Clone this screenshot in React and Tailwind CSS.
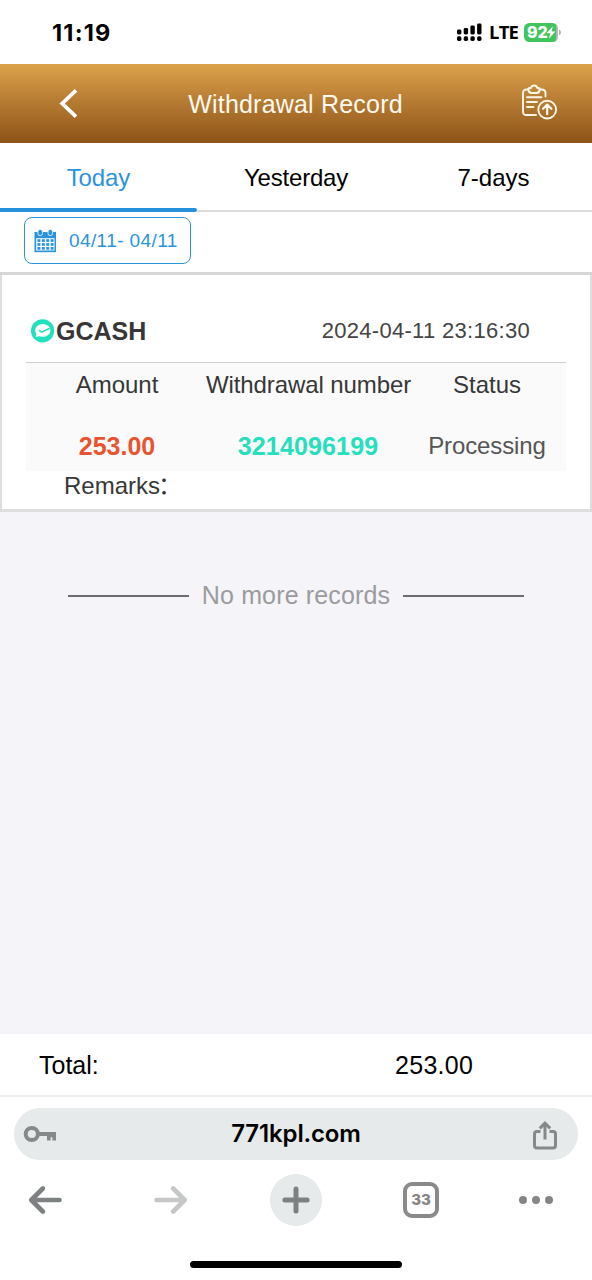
const tabs = [
  { label: 'Today', width: 'w-[197px]', tracking: 'tracking-[-0.1px]', active: true },
  { label: 'Yesterday', width: 'w-[198px]', tracking: 'tracking-[-0.2px]' },
  { label: '7-days', width: 'w-[197px]', tracking: 'tracking-[0px]' },
];

const record = {
  method: 'GCASH',
  time: '2024-04-11 23:16:30',
  amount: '253.00',
  number: '3214096199',
  status: 'Processing',
};

function SignalIcon() {
  const bars = [
    { x: 0, h: 5 },
    { x: 6.7, h: 6.5 },
    { x: 13.4, h: 9 },
    { x: 20.1, h: 11 },
  ];
  return (
    <svg width="25" height="19" viewBox="0 0 25 19" fill="#000">
      {bars.map((b) => (
        <g key={b.x}>
          <rect x={b.x} y={11.5 - b.h} width="4.4" height={b.h} rx="1.4" />
          <rect x={b.x} y="13.3" width="4.4" height="4.6" rx="1.6" />
        </g>
      ))}
    </svg>
  );
}

function BatteryIcon() {
  return (
    <div className="flex items-center">
      <div className="flex h-[19px] w-[34px] items-center overflow-hidden rounded-[5.5px] bg-[linear-gradient(to_right,#41c45d_32px,#b3b3b3_32px)] pl-[3px]">
        <span className="font-['Inter',sans-serif] text-[16px] leading-none font-extrabold tracking-[-0.2px] text-white">92</span>
        <svg width="10" height="13" viewBox="0 0 10 13" className="-ml-px shrink-0" fill="#fff">
          <path d="M6.8 0.3 L0.6 7.2 H4.3 L2.9 12.7 L9.4 5.4 H5.6 Z" />
        </svg>
      </div>
      <svg width="4" height="7" viewBox="0 0 4 7" fill="#b3b3b3">
        <path d="M1 0.5 C3.6 1.6 3.6 5.4 1 6.5 Z" />
      </svg>
    </div>
  );
}

function StatusBar() {
  return (
    <div className="flex h-16 items-center justify-between bg-white pr-[30px] pl-[52px]">
      <span className="pt-px font-['Inter',sans-serif] text-[23.5px] leading-none font-bold tracking-[1.2px] text-black">11:19</span>
      <div className="flex items-center">
        <SignalIcon />
        <span className="ml-[7px] w-[29px] font-['Open_Sans',sans-serif] text-[18.5px] leading-none font-bold tracking-[-0.8px] text-black">LTE</span>
        <div className="ml-[6px]">
          <BatteryIcon />
        </div>
      </div>
    </div>
  );
}

function Header() {
  return (
    <header className="flex h-[79px] items-center bg-linear-to-b from-[#dda24b] to-[#8d5317] pr-[34px] pl-[59px]">
      <svg width="20" height="32" viewBox="0 0 20 32" fill="none" stroke="#fff" strokeWidth="3.8">
        <path d="M17 2.3 L3.2 15.5 L17 28.7" />
      </svg>
      <h1 className="flex-1 pr-[9px] pt-px text-center text-[25px] leading-none tracking-[0.2px] text-[#fffaf0]">
        Withdrawal Record
      </h1>
      <svg width="37" height="37" viewBox="0 0 37 37" className="-mt-[3px]" fill="none" stroke="#fff8ea" strokeWidth="1.9" strokeLinecap="round" strokeLinejoin="round">
        <path d="M7.5 5.5 H5.5 Q2 5.5 2 9 V27.5 Q2 31 5.5 31 H15" />
        <path d="M18.5 5.5 H20.5 Q24.5 5.5 24.5 9 V12.5" />
        <path d="M7.3 5.3 Q7.3 4 8.8 4 H10 C10.4 0.6 15.8 0.6 16.2 4 H17.3 Q18.8 4 18.8 5.3 Q18.4 9 15.5 9 H10.6 Q7.7 9 7.3 5.3 Z" />
        <path d="M6 13.2 H20.5 M6 18 H16 M6 23 H12.5" />
        <circle cx="26.2" cy="25.6" r="8.9" />
        <path d="M26.2 30.2 V21 M22 24.8 L26.2 20.6 L30.4 24.8" strokeWidth="2.2" />
      </svg>
    </header>
  );
}

function Tabs() {
  return (
    <nav className="flex h-[69px] bg-white">
      {tabs.map((t) => (
        <div
          key={t.label}
          className={`flex flex-col justify-between ${t.width} ${t.active ? 'text-[#2b93dc]' : 'text-black'}`}
        >
          <span className={`pt-[22px] text-center text-[24px] leading-[25px] ${t.tracking}`}>{t.label}</span>
          {t.active ? (
            <div className="h-[4px] rounded-r-sm bg-[#2590dc]" />
          ) : (
            <div className="mb-[0.5px] h-[1.5px] bg-[#dcdcdc]" />
          )}
        </div>
      ))}
    </nav>
  );
}

function CalendarIcon() {
  return (
    <svg width="23" height="24" viewBox="0 0 23 24">
      <path fill="#2b93dc" d="M0.5 3 H22 V23.2 H0.5 Z" />
      <path fill="#fff" d="M2.2 9.2 H20.5 V21.5 H2.2 Z" />
      {[3.4, 7.8, 12.2, 16.6].map((x) =>
        [10.2, 14.1, 18].map((y) => <rect key={`${x}-${y}`} x={x} y={y} width="3" height="2.7" fill="#2b93dc" />)
      )}
      <rect x="3.9" y="0.4" width="4.6" height="6.2" rx="2.2" fill="#2b93dc" stroke="#fff" strokeWidth="0.8" />
      <rect x="14" y="0.4" width="4.6" height="6.2" rx="2.2" fill="#2b93dc" stroke="#fff" strokeWidth="0.8" />
    </svg>
  );
}

function DateFilter() {
  return (
    <div className="h-[63px] border-b-[3px] border-[#d6d6d6] bg-white pt-[5px] pl-6">
      <button className="flex h-[47px] w-[167px] items-center rounded-[8px] border-[1.5px] border-[#2b93dc] pl-[9px] text-[#2b93dc]">
        <CalendarIcon />
        <span className="ml-[12px] text-[19px] leading-none tracking-[0.4px] whitespace-nowrap">04/11- 04/11</span>
      </button>
    </div>
  );
}

function RecordCard() {
  return (
    <section className="h-[237px] border-x-2 border-b-[3px] border-[#dedee0] bg-white px-6 pt-[35px] text-[24px] leading-none text-[#373737]">
      <div className="flex h-[53px] items-center border-b border-[#cfcfcf] pb-[11px] pl-[5px]">
        <svg width="24" height="24" viewBox="0 0 24 24" className="shrink-0">
          <circle cx="11.6" cy="11.8" r="11.6" fill="#22e0bd" />
          <ellipse cx="11.8" cy="11.4" rx="7.6" ry="6.4" fill="#fff" />
          <path d="M5.5 14.5 L4.8 18 L9 17 Z" fill="#fff" />
          <path d="M8.2 11.3 L10.8 13.1 L18.6 9.2" fill="none" stroke="#22e0bd" strokeWidth="1.6" />
        </svg>
        <span className="ml-[1px] pt-px text-[25px] font-bold">{record.method}</span>
        <span className="mr-[36px] ml-auto text-[22px] tracking-[0.3px] text-[#444]">{record.time}</span>
      </div>
      <div className="grid h-[108px] grid-cols-[182px_200px_158px] grid-rows-[61px_25px] bg-[#fafafa] pt-[10px] text-center">
        <span>Amount</span>
        <span className="-ml-[2px] tracking-[-0.1px] whitespace-nowrap">Withdrawal number</span>
        <span>Status</span>
        <span className="text-[25px] font-bold text-[#e9532f]">{record.amount}</span>
        <span className="text-[25px] font-bold tracking-[0.15px] text-[#25dfbd]">{record.number}</span>
        <span className="tracking-[-0.1px] text-[#555]">{record.status}</span>
      </div>
      <div className="mt-[3px] flex pl-[38px]">
        <span>Remarks</span>
        <span className="-mt-[2px] -ml-[2px] font-['Noto_Sans_CJK_SC',sans-serif]">：</span>
      </div>
    </section>
  );
}

function NoMore() {
  return (
    <div className="flex items-center justify-center pt-[70px] text-[25px] text-[#9b9b9d]">
      <div className="mt-px h-[2px] w-[121px] bg-[#6c6c6e]" />
      <span className="-mt-px w-[214px] text-center leading-[28px] tracking-[0.15px]">No more records</span>
      <div className="mt-px h-[2px] w-[121px] bg-[#6c6c6e]" />
    </div>
  );
}

function TotalBar() {
  return (
    <div className="flex h-[63px] items-center border-b-2 border-[#eceef0] bg-white pt-[2px] pl-[39px] text-[25px] leading-none text-black">
      <span className="w-[356px]">Total:</span>
      <span className="tracking-[0.3px]">253.00</span>
    </div>
  );
}

function BrowserChrome() {
  return (
    <footer className="h-[183px] bg-white pt-[11px]">
      <div className="mx-[14px] flex h-[52px] items-center justify-between rounded-full bg-[#e6eaea] pr-[20px] pl-[9px]">
        <svg width="34" height="18" viewBox="0 0 34 18">
          <circle cx="8.8" cy="9" r="6.1" fill="none" stroke="#858989" strokeWidth="4" />
          <path fill="#858989" d="M15.5 7 H33 V15.5 H29.4 V12.3 H27.6 V15.5 H24 V11 H15.5 Z" />
        </svg>
        <span className="pl-[3px] font-['Inter',sans-serif] text-[24px] leading-none font-semibold tracking-[-0.15px] text-black">771kpl.com</span>
        <svg width="26" height="30" viewBox="0 0 26 30" className="mt-[3px]" fill="none" stroke="#858989" strokeWidth="3">
          <path d="M8.5 10.5 H5 Q2.5 10.5 2.5 13 V24.5 Q2.5 27 5 27 H21 Q23.5 27 23.5 24.5 V13 Q23.5 10.5 21 10.5 H17.5" />
          <path d="M13 18.5 V3 M7.8 7.4 L13 2.2 L18.2 7.4" />
        </svg>
      </div>
      <div className="mt-[14px] flex h-[51px] items-center text-[#858989]">
        <svg width="34" height="28" viewBox="0 0 34 28" className="ml-[28px]" fill="none" stroke="#7d8181" strokeWidth="4.6" strokeLinecap="round" strokeLinejoin="round">
          <path d="M31.5 14 H3.5 M14.8 2.5 L3.3 14 L14.8 25.5" />
        </svg>
        <svg width="34" height="28" viewBox="0 0 34 28" className="ml-[92px]" fill="none" stroke="#c6c8c8" strokeWidth="4.6" strokeLinecap="round" strokeLinejoin="round">
          <path d="M2.5 14 H30.5 M19.2 2.5 L30.7 14 L19.2 25.5" />
        </svg>
        <div className="ml-[82px] flex size-[52px] items-center justify-center rounded-full bg-[#e6eaea]">
          <svg width="28" height="28" viewBox="0 0 28 28" stroke="#7d8181" strokeWidth="5" strokeLinecap="round">
            <path d="M2.9 14 H25.1 M14 2.9 V25.1" />
          </svg>
        </div>
        <div className="ml-[81px] flex size-[36px] items-center justify-center rounded-[9px] border-4 border-[#8a8a8a] font-['Inter',sans-serif] text-[15px] leading-none font-extrabold text-[#858585]">
          33
        </div>
        <div className="ml-[80px] flex gap-[5px]">
          <div className="size-[8px] rounded-full bg-[#858585]" />
          <div className="size-[8px] rounded-full bg-[#858585]" />
          <div className="size-[8px] rounded-full bg-[#858585]" />
        </div>
      </div>
      <div className="mx-auto mt-[36px] h-[7px] w-[212px] rounded-full bg-black" />
    </footer>
  );
}

export default function App() {
  return (
    <div className="flex h-[1280px] w-[592px] flex-col overflow-hidden bg-[#f4f4f9] font-['Liberation_Sans',Arial,sans-serif]">
      <StatusBar />
      <Header />
      <Tabs />
      <DateFilter />
      <RecordCard />
      <main className="flex-1">
        <NoMore />
      </main>
      <TotalBar />
      <BrowserChrome />
    </div>
  );
}
